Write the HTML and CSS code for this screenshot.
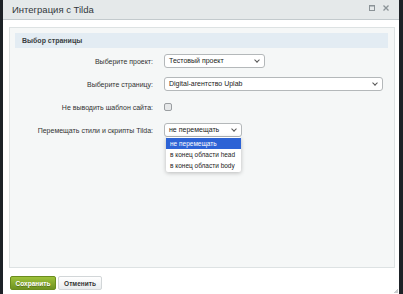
FILE: index.html
```html
<!DOCTYPE html>
<html lang="ru">
<head>
  <meta charset="UTF-8">
  <title>Интеграция с Tilda</title>
  <link rel="stylesheet" href="styles.css">
</head>
<body>
  <div class="dialog">
    <div class="titlebar">
      <span class="title">Интеграция с Tilda</span>
      <div class="title-icons">
        <svg width="6" height="6" viewBox="0 0 6 6"><rect x="0.5" y="0.5" width="5" height="5" fill="none" stroke="#8b9397" stroke-width="1"/><line x1="0" y1="1" x2="6" y2="1" stroke="#8b9397"/></svg>
        <svg width="6" height="6" viewBox="0 0 6 6"><path d="M0.5 0.5 L5.5 5.5 M5.5 0.5 L0.5 5.5" stroke="#8b9397" stroke-width="1.3"/></svg>
      </div>
    </div>

    <div class="content">
      <div class="panel">
        <div class="panel-head">Выбор страницы</div>

        <div class="form">
          <div class="row">
            <label>Выберите проект:</label>
            <div class="select select-project">Тестовый проект<span class="arrow"></span></div>
          </div>
          <div class="row">
            <label>Выберите страницу:</label>
            <div class="select select-page">Digital-агентство Uplab<span class="arrow"></span></div>
          </div>
          <div class="row">
            <label>Не выводить шаблон сайта:</label>
            <span class="checkbox"></span>
          </div>
          <div class="row">
            <label>Перемещать стили и скрипты Tilda:</label>
            <div class="select select-move">не перемещать<span class="arrow"></span>
              <ul class="dropdown">
                <li class="active">не перемещать</li>
                <li>в конец области head</li>
                <li>в конец области body</li>
              </ul>
            </div>
          </div>
        </div>
      </div>

      <div class="buttons">
        <button class="btn btn-save">Сохранить</button>
        <button class="btn btn-cancel">Отменить</button>
      </div>
    </div>
    <span class="grip"></span>
  </div>
</body>
</html>
```

FILE: styles.css
```css
/* Диалог интеграции */
body {
  margin: 0;
  background: #1d2227;
  font-family: 'Liberation Sans', Arial, sans-serif;
  color: #333;
  overflow: hidden;
}
.dialog {
  position: relative;
  margin: 0 4px 0 3px;
  height: 294px;
  background: #fff;
}
.titlebar {
  height: 19px;
  border-bottom: 1px solid #c3cacd;
  background: #e5e9ea;
  display: flex;
  align-items: center;
  justify-content: space-between;
  padding: 0 10px 0 9px;
}
.title {
  font-size: 9.5px;
  color: #33383b;
}
.title-icons {
  display: flex;
  gap: 8px;
  margin-top: -4px;
}
.title-icons svg {
  display: block;
}

.content {
  padding: 7px 4px 0 6px;
}
.panel {
  height: 229px;
  border: 1px solid #dde2e3;
  background: #f5f7f7;
  padding: 5px 6px 5px 5px;
}
.panel-head {
  height: 15px;
  line-height: 15px;
  background: #e3ecf3;
  padding-left: 7px;
  font-size: 7px;
  font-weight: bold;
  color: #3a3f42;
}

.form {
  padding-top: 6px;
  display: flex;
  flex-direction: column;
  gap: 9px;
}
.row {
  display: flex;
  align-items: center;
  height: 14px;
}
.row label {
  width: 138px;
  flex-shrink: 0;
  text-align: right;
  font-size: 7px;
  color: #333;
  margin-right: 11px;
}
.select {
  position: relative;
  box-sizing: border-box;
  height: 14px;
  line-height: 12px;
  border: 1px solid #b4b8ba;
  border-radius: 3px;
  background: #fff;
  font-size: 7px;
  color: #222;
  padding-left: 4px;
}
.select-project { width: 101px; }
.select-page { width: 219px; }
.select-move { width: 78px; }
.arrow {
  position: absolute;
  right: 5px;
  top: 3px;
  width: 3px;
  height: 3px;
  border-right: 1px solid #555;
  border-bottom: 1px solid #555;
  transform: rotate(45deg);
}
.checkbox {
  box-sizing: border-box;
  width: 8px;
  height: 8px;
  border: 1px solid #9a9ea1;
  border-radius: 2px;
  background: #e6e8e9;
}

.dropdown {
  position: absolute;
  left: 1px;
  top: 13px;
  width: 75px;
  margin: 0;
  padding: 1px 0 1px;
  list-style: none;
  background: #fff;
  border-radius: 2px;
  box-shadow: 0 1px 4px rgba(0,0,0,0.25);
  z-index: 10;
}
.dropdown li {
  height: 11px;
  line-height: 11px;
  padding-left: 4px;
  font-size: 6.5px;
  color: #222;
}
.dropdown li.active {
  background: #2d63d5;
  color: #fff;
}

.buttons {
  display: flex;
  gap: 2px;
  padding: 8px 0 0 1px;
}
.btn {
  height: 14px;
  padding: 0;
  border-radius: 2px;
  font-family: 'Liberation Sans', Arial, sans-serif;
  font-size: 6.5px;
  font-weight: bold;
  cursor: pointer;
}
.btn-save {
  width: 46px;
  border: 1px solid #6a8c1e;
  background: linear-gradient(#9ec23a, #6e9222);
  color: #fff;
  text-shadow: 0 1px 0 rgba(0,0,0,0.3);
}
.btn-cancel {
  width: 44px;
  border: 1px solid #d2d6d8;
  background: linear-gradient(#fff, #e9ecee);
  color: #333;
}
.grip {
  position: absolute;
  right: 1px;
  bottom: 1px;
  width: 4px;
  height: 4px;
  background: linear-gradient(135deg, transparent 50%, #c9cdcf 50%);
}
```
